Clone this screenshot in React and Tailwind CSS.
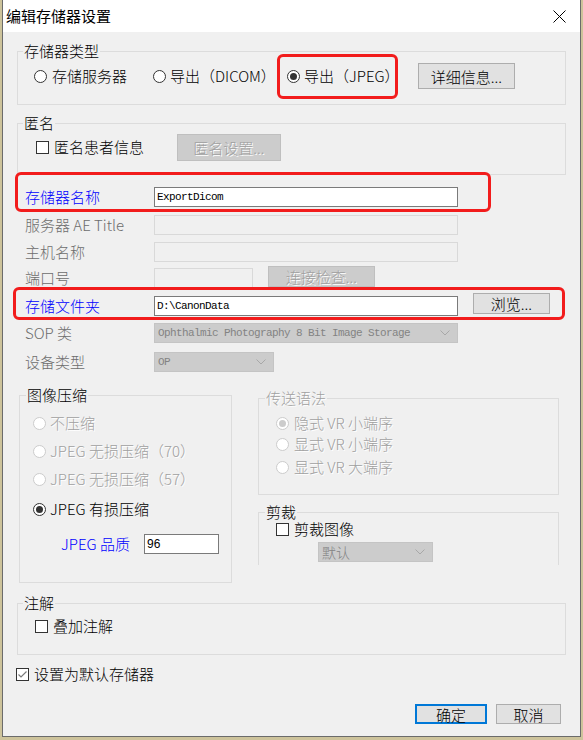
import React from 'react'

const dis = 'text-[#a0a0a0] [text-shadow:1px_1px_0_#ffffff]'

function Radio({ checked, disabled }) {
  return (
    <span
      className={`flex h-[13px] w-[13px] shrink-0 items-center justify-center rounded-full border bg-white ${
        disabled ? 'border-[#cccccc]' : 'border-[#333333]'
      }`}
    >
      {checked && <span className={`h-[7px] w-[7px] rounded-full ${disabled ? 'bg-[#cccccc]' : 'bg-[#333333]'}`} />}
    </span>
  )
}

function Check({ checked }) {
  return (
    <span className="flex h-[13px] w-[13px] shrink-0 items-center justify-center border border-[#333333] bg-white">
      {checked && (
        <svg width="11" height="11" viewBox="0 0 11 11">
          <path d="M1.5 5.5 L4 8 L9.5 2.5" fill="none" stroke="#7a7a7a" strokeWidth="1.2" />
        </svg>
      )}
    </span>
  )
}

function Chevron() {
  return (
    <svg width="10" height="6" viewBox="0 0 10 6" className="shrink-0">
      <path d="M0.5 0.5 L5 5 L9.5 0.5" fill="none" stroke="#a8a8a8" strokeWidth="1" />
    </svg>
  )
}

function Btn({ children, disabled, primary, className = '' }) {
  let look = 'border border-[#adadad] bg-[#e1e1e1] text-black'
  if (disabled) look = `border border-[#bfbfbf] bg-[#cccccc] ${dis}`
  if (primary) look = 'border-2 border-[#0078d7] bg-[#e1e1e1] text-black'
  return (
    <div className={`flex shrink-0 items-center justify-center text-[15px] leading-none ${look} ${className}`}>
      {children}
    </div>
  )
}

function Field({ value, disabled, className = '' }) {
  return (
    <div
      className={`flex h-[20px] items-center pl-[2px] font-['Liberation_Mono',monospace] text-[11px] tracking-[-0.6px] ${
        disabled ? 'border border-[#d9d9d9] bg-[#f0f0f0]' : 'border border-[#7a7a7a] bg-white'
      } ${className}`}
    >
      {value}
    </div>
  )
}

function Pick({ value, mono, className = '' }) {
  return (
    <div
      className={`flex h-[20px] items-center justify-between border border-[#c4c4c4] bg-[#cccccc] pl-[3px] pr-[7px] text-[#838383] ${
        mono ? "font-['Liberation_Mono',monospace] text-[11px] tracking-[-0.6px]" : 'text-[14px]'
      } ${className}`}
    >
      <span>{value}</span>
      <Chevron />
    </div>
  )
}

function Row({ label, blue, children, className = '' }) {
  return (
    <div className={`relative flex h-[20px] items-center pl-[8px] ${className}`}>
      <span className={`w-[129px] shrink-0 text-[15px] leading-[20px] ${blue ? 'text-[#0000ff]' : 'text-[#6d6d6d]'}`}>
        {label}
      </span>
      {children}
    </div>
  )
}

const legend = 'ml-[5px] px-[1px] text-[15px] leading-[20px]'

export default function App() {
  return (
    <div className="h-[740px] w-[583px] overflow-hidden bg-[#cdc39b] font-['Noto_Sans_CJK_SC',sans-serif] font-light text-black">
      <div className="ml-[2px] flex h-[737px] w-[579px] flex-col border-x border-b border-[#6b6b6b]">
        {/* Title bar */}
        <div className="flex h-[32px] shrink-0 items-center justify-between bg-white pl-[3px] pr-[14px]">
          <span className="text-[15px] font-normal">编辑存储器设置</span>
          <svg width="13" height="13" viewBox="0 0 13 13">
            <path d="M0.5 0.5 L12.5 12.5 M12.5 0.5 L0.5 12.5" stroke="#000" strokeWidth="1" />
          </svg>
        </div>

        <div className="flex-1 bg-[#f0f0f0] pl-[14px] pr-[14px]">
          {/* 存储器类型 */}
          <fieldset className="mt-[9px] border border-[#dcdcdc] pb-[15px] pt-[2px]">
            <legend className={legend}>存储器类型</legend>
            <div className="flex h-[26px] items-center pl-[16px] text-[15px]">
              <div className="flex w-[119px] items-center gap-[5px]">
                <Radio />
                <span>存储服务器</span>
              </div>
              <div className="flex w-[134px] items-center gap-[4px]">
                <Radio />
                <span>导出（DICOM）</span>
              </div>
              <div className="relative flex w-[131px] items-center gap-[4px]">
                <Radio checked />
                <span>导出（JPEG）</span>
                <div className="pointer-events-none absolute left-[-10px] top-[-11px] h-[45px] w-[121px] rounded-[6px] border-[3px] border-[#f21c1c]" />
              </div>
              <Btn className="h-[26px] w-[97px]">详细信息...</Btn>
            </div>
          </fieldset>

          {/* 匿名 */}
          <fieldset className="mt-[8px] border border-[#dcdcdc] pb-[13px] pt-[1px]">
            <legend className={legend}>匿名</legend>
            <div className="flex h-[27px] items-center pl-[18px] text-[15px]">
              <div className="flex w-[141px] items-center gap-[5px]">
                <Check />
                <span>匿名患者信息</span>
              </div>
              <Btn disabled className="h-[27px] w-[104px]">
                匿名设置...
              </Btn>
            </div>
          </fieldset>

          {/* Form rows */}
          <Row label="存储器名称" blue className="mt-[12px]">
            <Field value="ExportDicom" className="w-[304px]" />
            <div className="pointer-events-none absolute left-[-2px] top-[-15px] h-[40px] w-[476px] rounded-[6px] border-[3px] border-[#f21c1c]" />
          </Row>
          <Row label="服务器 AE Title" className="mt-[8px]">
            <Field disabled className="w-[304px]" />
          </Row>
          <Row label="主机名称" className="mt-[7px]">
            <Field disabled className="w-[304px]" />
          </Row>
          <Row label="端口号" className="mt-[6px]">
            <Field disabled className="w-[99px]" />
            <Btn disabled className="-mt-[3px] ml-[15px] h-[21px] w-[107px]">
              连接检查...
            </Btn>
          </Row>
          <Row label="存储文件夹" blue className="mt-[8px]">
            <Field value="D:\CanonData" className="w-[304px]" />
            <Btn className="-mt-[5px] ml-[15px] h-[21px] w-[77px]">浏览...</Btn>
            <div className="pointer-events-none absolute left-[-4px] top-[-9px] h-[33px] w-[552px] rounded-[6px] border-[3px] border-[#f21c1c]" />
          </Row>
          <Row label="SOP 类" className="mt-[7px]">
            <Pick mono value="Ophthalmic Photography 8 Bit Image Storage" className="w-[304px]" />
          </Row>
          <Row label="设备类型" className="mt-[9px]">
            <Pick mono value="OP" className="w-[120px]" />
          </Row>

          {/* Lower section */}
          <div className="mt-[13px] flex items-start pl-[2px]">
            <fieldset className="w-[213px] shrink-0 border border-[#dcdcdc] pb-[28px] pt-[8px]">
              <legend className="ml-[6px] px-[1px] text-[15px] leading-[20px]">图像压缩</legend>
              <div className="flex h-[20px] items-center gap-[4px] pl-[13px] text-[15px]">
                <Radio disabled />
                <span className={dis}>不压缩</span>
              </div>
              <div className="mt-[8px] flex h-[20px] items-center gap-[4px] pl-[13px] text-[15px]">
                <Radio disabled />
                <span className={dis}>JPEG 无损压缩（70）</span>
              </div>
              <div className="mt-[8px] flex h-[20px] items-center gap-[4px] pl-[13px] text-[15px]">
                <Radio disabled />
                <span className={dis}>JPEG 无损压缩（57）</span>
              </div>
              <div className="mt-[10px] flex h-[20px] items-center gap-[4px] pl-[13px] text-[15px]">
                <Radio checked />
                <span>JPEG 有损压缩</span>
              </div>
              <div className="mt-[15px] flex h-[20px] items-center pl-[41px]">
                <span className="w-[83px] shrink-0 text-[15px] text-[#0000ff]">JPEG 品质</span>
                <div className="flex h-[20px] w-[75px] items-center border border-[#7a7a7a] bg-white pl-[2px] font-['Liberation_Sans',sans-serif] text-[12px] font-normal">
                  96
                </div>
              </div>
            </fieldset>

            <div className="ml-[26px] w-[301px] shrink-0 pt-[3px]">
              <fieldset className="border border-[#dcdcdc] pb-[17px] pt-[5px]">
                <legend className={`ml-[6px] px-[1px] text-[15px] leading-[20px] ${dis}`}>传送语法</legend>
                <div className="flex h-[20px] items-center gap-[5px] pl-[17px] text-[15px]">
                  <Radio checked disabled />
                  <span className={dis}>隐式 VR 小端序</span>
                </div>
                <div className="mt-[1px] flex h-[20px] items-center gap-[5px] pl-[17px] text-[15px]">
                  <Radio disabled />
                  <span className={dis}>显式 VR 小端序</span>
                </div>
                <div className="mt-[3px] flex h-[20px] items-center gap-[5px] pl-[17px] text-[15px]">
                  <Radio disabled />
                  <span className={dis}>显式 VR 大端序</span>
                </div>
              </fieldset>

              <fieldset className="mt-[7px] border-x border-t border-[#dcdcdc] pb-[3px]">
                <legend className="ml-[6px] px-[1px] text-[15px] leading-[20px]">剪裁</legend>
                <div className="flex h-[14px] items-center gap-[5px] pl-[17px] text-[15px]">
                  <Check />
                  <span>剪裁图像</span>
                </div>
                <div className="mt-[6px] pl-[59px]">
                  <Pick value="默认" className="w-[115px]" />
                </div>
              </fieldset>
            </div>
          </div>

          {/* 注解 */}
          <fieldset className="mt-[10px] border border-[#dcdcdc] pb-[20px] pt-[5px]">
            <legend className={legend}>注解</legend>
            <div className="flex h-[16px] items-center gap-[5px] pl-[17px] text-[15px]">
              <Check />
              <span>叠加注解</span>
            </div>
          </fieldset>

          <div className="-ml-[1px] mt-[11px] flex h-[16px] items-center gap-[5px] text-[15px]">
            <Check checked />
            <span>设置为默认存储器</span>
          </div>

          <div className="mt-[22px] flex justify-end gap-[9px] pr-[5px]">
            <Btn primary className="h-[20px] w-[72px]">
              确定
            </Btn>
            <Btn className="h-[20px] w-[65px]">取消</Btn>
          </div>
        </div>
      </div>
    </div>
  )
}
